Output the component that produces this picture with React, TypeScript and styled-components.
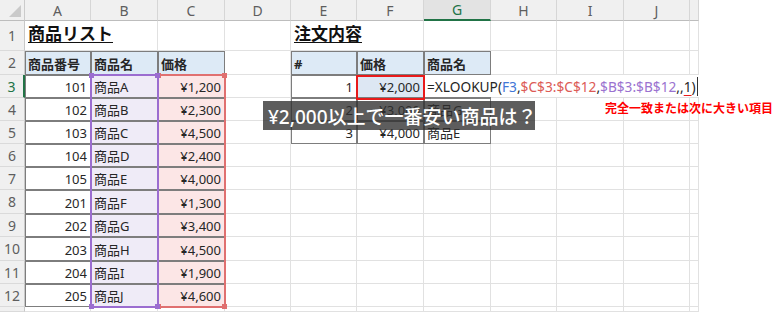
import React from 'react';
import styled, { createGlobalStyle, css } from 'styled-components';

const GlobalStyle = createGlobalStyle`
  * { box-sizing: border-box; }
  html, body { margin: 0; padding: 0; background: #fff; }
  body { font-family: "Noto Sans", "Noto Sans CJK JP", sans-serif; }
`;

// column widths A..K (K is cut off at the window edge)
const COL_W = [66, 67, 67, 66, 66, 67, 67, 66, 67, 66, 9];
const LETTERS = ['A', 'B', 'C', 'D', 'E', 'F', 'G', 'H', 'I', 'J', ''];
// row heights 1..13
const ROW_H = [30, 24, 23, 23, 23, 23, 23, 24, 23, 24, 23, 23, 5];

const GRID = '#e1e1e1';
const EDGE = '#7d7d7d';
const HEAD_BLUE = '#ddeaf6';
const GREEN = '#217346';

const products = [
  ['101', '商品A', '¥1,200'],
  ['102', '商品B', '¥2,300'],
  ['103', '商品C', '¥4,500'],
  ['104', '商品D', '¥2,400'],
  ['105', '商品E', '¥4,000'],
  ['201', '商品F', '¥1,300'],
  ['202', '商品G', '¥3,400'],
  ['203', '商品H', '¥4,500'],
  ['204', '商品I', '¥1,900'],
  ['205', '商品J', '¥4,600'],
];

const orders = [
  ['1', '¥2,000', ''],
  ['2', '¥3,000', '商品G'],
  ['3', '¥4,000', '商品E'],
];

const Sheet = styled.div`
  position: relative;
  display: grid;
  grid-template-columns: 25px ${COL_W.map((w) => `${w}px`).join(' ')};
  grid-template-rows: 21px ${ROW_H.map((h) => `${h}px`).join(' ')};
  width: 699px;
  height: 312px;
  overflow: hidden;
  background: #fff;
  color: #262626;
`;

const Corner = styled.div`
  position: relative;
  background: #f0f0f0;
  border-right: 1px solid #cbcbcb;
  border-bottom: 1px solid #bdbdbd;

  &::after {
    content: '';
    position: absolute;
    right: 3px;
    bottom: 3px;
    border-style: solid;
    border-width: 0 0 12px 12px;
    border-color: transparent transparent #cacaca transparent;
  }
`;

const ColHead = styled.div<{ $active?: boolean }>`
  display: flex;
  align-items: center;
  justify-content: center;
  font-size: 14px;
  background: ${(p) => (p.$active ? '#e3e3e3' : '#f0f0f0')};
  color: ${(p) => (p.$active ? GREEN : '#5e5e5e')};
  border-right: 1px solid #d6d6d6;
  border-bottom: ${(p) => (p.$active ? `2px solid ${GREEN}` : '1px solid #bdbdbd')};
`;

const RowHead = styled.div<{ $active?: boolean }>`
  display: flex;
  align-items: center;
  justify-content: center;
  font-size: 14px;
  background: #f0f0f0;
  color: ${(p) => (p.$active ? GREEN : '#5e5e5e')};
  border-right: ${(p) => (p.$active ? `2px solid ${GREEN}` : '1px solid #c8c8c8')};
  border-bottom: 1px solid #dadada;
`;

const Cell = styled.div<{
  $fill?: string;
  $boxed?: boolean;
  $right?: boolean;
  $bold?: boolean;
  $span?: number;
}>`
  display: flex;
  align-items: flex-end;
  justify-content: ${(p) => (p.$right ? 'flex-end' : 'flex-start')};
  padding: 0 3px 1px;
  white-space: nowrap;
  font-size: 13px;
  font-weight: ${(p) => (p.$bold ? 700 : 400)};
  background: ${(p) => p.$fill ?? '#fff'};
  border-right: 1px solid ${(p) => (p.$boxed ? EDGE : GRID)};
  border-bottom: 1px solid ${(p) => (p.$boxed ? EDGE : GRID)};
  ${(p) => p.$boxed && css`box-shadow: inset 1px 1px 0 ${EDGE};`}
  ${(p) => p.$span && css`grid-column: span ${p.$span};`}
`;

const Title = styled.span`
  font-size: 17px;
  font-weight: 700;
  color: #111;
  text-decoration: underline;
  text-underline-offset: 2px;
  margin-bottom: 4px;
`;

const Range = styled.div<{ $x: number; $y: number; $w: number; $h: number; $color: string }>`
  position: absolute;
  left: ${(p) => p.$x}px;
  top: ${(p) => p.$y}px;
  width: ${(p) => p.$w}px;
  height: ${(p) => p.$h}px;
  border: 2px solid ${(p) => p.$color};
  pointer-events: none;
`;

const Handle = styled.span<{ $color: string; $pos: 'tl' | 'tr' | 'bl' | 'br' }>`
  position: absolute;
  width: 5px;
  height: 5px;
  background: ${(p) => p.$color};
  ${(p) => (p.$pos[0] === 't' ? 'top: -3px;' : 'bottom: -3px;')}
  ${(p) => (p.$pos[1] === 'l' ? 'left: -3px;' : 'right: -3px;')}
`;

const Mark = styled.div`
  position: absolute;
  left: 356px;
  top: 75px;
  width: 69px;
  height: 25px;
  border: 2px solid #e81a1a;
`;

const Editor = styled.div`
  position: absolute;
  left: 424px;
  top: 75px;
  width: 275px;
  height: 22px;
  display: flex;
  align-items: flex-end;
  padding: 0 0 1px 3px;
  background: #fff;
  font-size: 13.7px;
  white-space: nowrap;
  color: #262626;
`;

const Ref = styled.span<{ $color: string }>`
  color: ${(p) => p.$color};
`;

const Flagged = styled.span`
  text-decoration: underline;
  text-decoration-color: #e81a1a;
  text-underline-offset: 3px;
`;

const Caret = styled.span`
  display: inline-block;
  width: 1px;
  height: 19px;
  margin-left: 1px;
  background: #333;
`;

const Caption = styled.div`
  position: absolute;
  left: 263px;
  top: 101px;
  width: 272px;
  height: 29px;
  display: flex;
  align-items: center;
  padding-left: 5px;
  background: rgba(48, 48, 48, 0.78);
  color: #fff;
  font-size: 19px;
  font-weight: 500;
  white-space: nowrap;
`;

const Note = styled.div`
  position: absolute;
  left: 605px;
  top: 99px;
  font-size: 12px;
  font-weight: 700;
  color: #ff0000;
  white-space: nowrap;
`;

const Page = styled.div`
  width: 784px;
  height: 312px;
  overflow: hidden;
  background: #fff;
`;

const corners = ['tl', 'tr', 'bl', 'br'] as const;

function cellFor(row: number, col: number) {
  // row is the sheet row number, col is 0 for A
  if (row === 1) {
    if (col === 0) return <Cell key={col} $span={2}><Title>商品リスト</Title></Cell>;
    if (col === 4) return <Cell key={col} $span={2}><Title>注文内容</Title></Cell>;
    if (col === 1 || col === 5) return null;
    return <Cell key={col} />;
  }
  if (row === 2) {
    const heads: Record<number, string> = { 0: '商品番号', 1: '商品名', 2: '価格', 4: '#', 5: '価格', 6: '商品名' };
    if (col in heads) return <Cell key={col} $boxed $bold $fill={HEAD_BLUE}>{heads[col]}</Cell>;
    return <Cell key={col} />;
  }
  const p = products[row - 3];
  if (p && col <= 2) {
    const fill = col === 1 ? '#efebf7' : col === 2 ? '#fce6e6' : undefined;
    return (
      <Cell key={col} $boxed $fill={fill} $right={col !== 1}>
        {p[col]}
      </Cell>
    );
  }
  const o = orders[row - 3];
  if (o && col >= 4 && col <= 6) {
    const k = col - 4;
    return (
      <Cell key={col} $boxed $right={k !== 2} $fill={row === 3 && k === 1 ? '#dde7f3' : undefined}>
        {o[k]}
      </Cell>
    );
  }
  return <Cell key={col} />;
}

export default function App() {
  return (
    <Page>
      <GlobalStyle />
      <Sheet>
        <Corner />
        {LETTERS.map((l, i) => (
          <ColHead key={i} $active={l === 'G'}>{l}</ColHead>
        ))}
        {ROW_H.map((_, r) => {
          const row = r + 1;
          return (
            <React.Fragment key={row}>
              <RowHead $active={row === 3}>{row < 13 ? row : ''}</RowHead>
              {COL_W.map((__, c) => cellFor(row, c))}
            </React.Fragment>
          );
        })}

        <Range $x={157} $y={74} $w={69} $h={234} $color="#e07070">
          {corners.map((k) => <Handle key={k} $pos={k} $color="#e07070" />)}
        </Range>
        <Range $x={90} $y={74} $w={69} $h={234} $color="#9b6dd0">
          {corners.map((k) => <Handle key={k} $pos={k} $color="#9b6dd0" />)}
        </Range>

        <Editor>
          =XLOOKUP(<Ref $color="#3f76d6">F3</Ref>,<Ref $color="#dc5a55">$C$3:$C$12</Ref>,
          <Ref $color="#9a72d0">$B$3:$B$12</Ref>,,<Flagged>1</Flagged>)
          <Caret />
        </Editor>
        <Mark />
        <Caption>¥2,000以上で一番安い商品は？</Caption>
      </Sheet>
      <Note>完全一致または次に大きい項目</Note>
    </Page>
  );
}
